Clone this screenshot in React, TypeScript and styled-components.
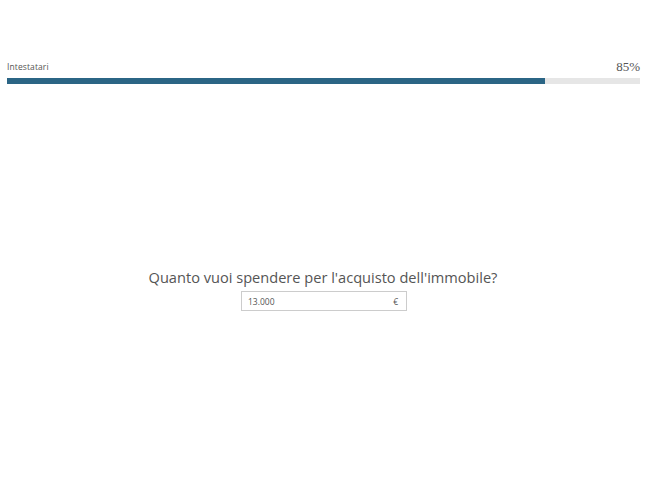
import styled, { createGlobalStyle } from 'styled-components'

const GlobalStyle = createGlobalStyle`
  html, body {
    margin: 0;
    padding: 0;
    background: #fff;
  }
`

const progress = 85

const App = () => {
  return (
    <Page>
      <GlobalStyle />
      <Header>
        <HeaderRow>
          <StepLabel>Intestatari</StepLabel>
          <Percent>{progress}%</Percent>
        </HeaderRow>
        <Track>
          <Fill style={{ width: `${progress}%` }} />
        </Track>
      </Header>
      <Question>
        <Title>Quanto vuoi spendere per l'acquisto dell'immobile?</Title>
        <AmountField>
          <AmountInput defaultValue="13.000" />
          <Currency>€</Currency>
        </AmountField>
      </Question>
    </Page>
  )
}

const Page = styled.div`
  width: 650px;
  height: 490px;
  padding: 56px 10px 0 7px;
  box-sizing: border-box;
  display: flex;
  flex-direction: column;
`

const Header = styled.div`
  display: flex;
  flex-direction: column;
`

const HeaderRow = styled.div`
  display: flex;
  justify-content: space-between;
  align-items: flex-end;
  height: 22px;
`

const StepLabel = styled.span`
  font-family: 'Open Sans', sans-serif;
  font-size: 8.5px;
  letter-spacing: 0.1px;
  color: #555;
  line-height: 10px;
  margin-bottom: 6px;
`

const Percent = styled.span`
  font-family: 'Liberation Serif', 'Times New Roman', serif;
  font-size: 13px;
  color: #555;
  line-height: 14px;
  margin-bottom: 4px;
`

const Track = styled.div`
  height: 6px;
  background: #e6e6e6;
`

const Fill = styled.div`
  height: 100%;
  background: #2b6585;
`

const Question = styled.div`
  display: flex;
  flex-direction: column;
  align-items: center;
  margin-top: 183px;
  padding-right: 1px;
`

const Title = styled.h2`
  margin: 0 0 4px;
  font-family: 'Open Sans', sans-serif;
  font-weight: 400;
  font-size: 14.6px;
  line-height: 20px;
  color: #555;
`

const AmountField = styled.div`
  width: 166px;
  height: 20px;
  box-sizing: border-box;
  border: 1px solid #ccc;
  display: flex;
  align-items: center;
  padding: 0 8px 0 6px;
  margin-left: 2px;
`

const AmountInput = styled.input`
  flex: 1;
  min-width: 0;
  border: none;
  outline: none;
  padding: 0;
  font-family: 'Open Sans', sans-serif;
  font-size: 8.5px;
  color: #555;
  background: transparent;
`

const Currency = styled.span`
  font-family: 'Open Sans', sans-serif;
  font-size: 8.5px;
  color: #555;
`

export default App
